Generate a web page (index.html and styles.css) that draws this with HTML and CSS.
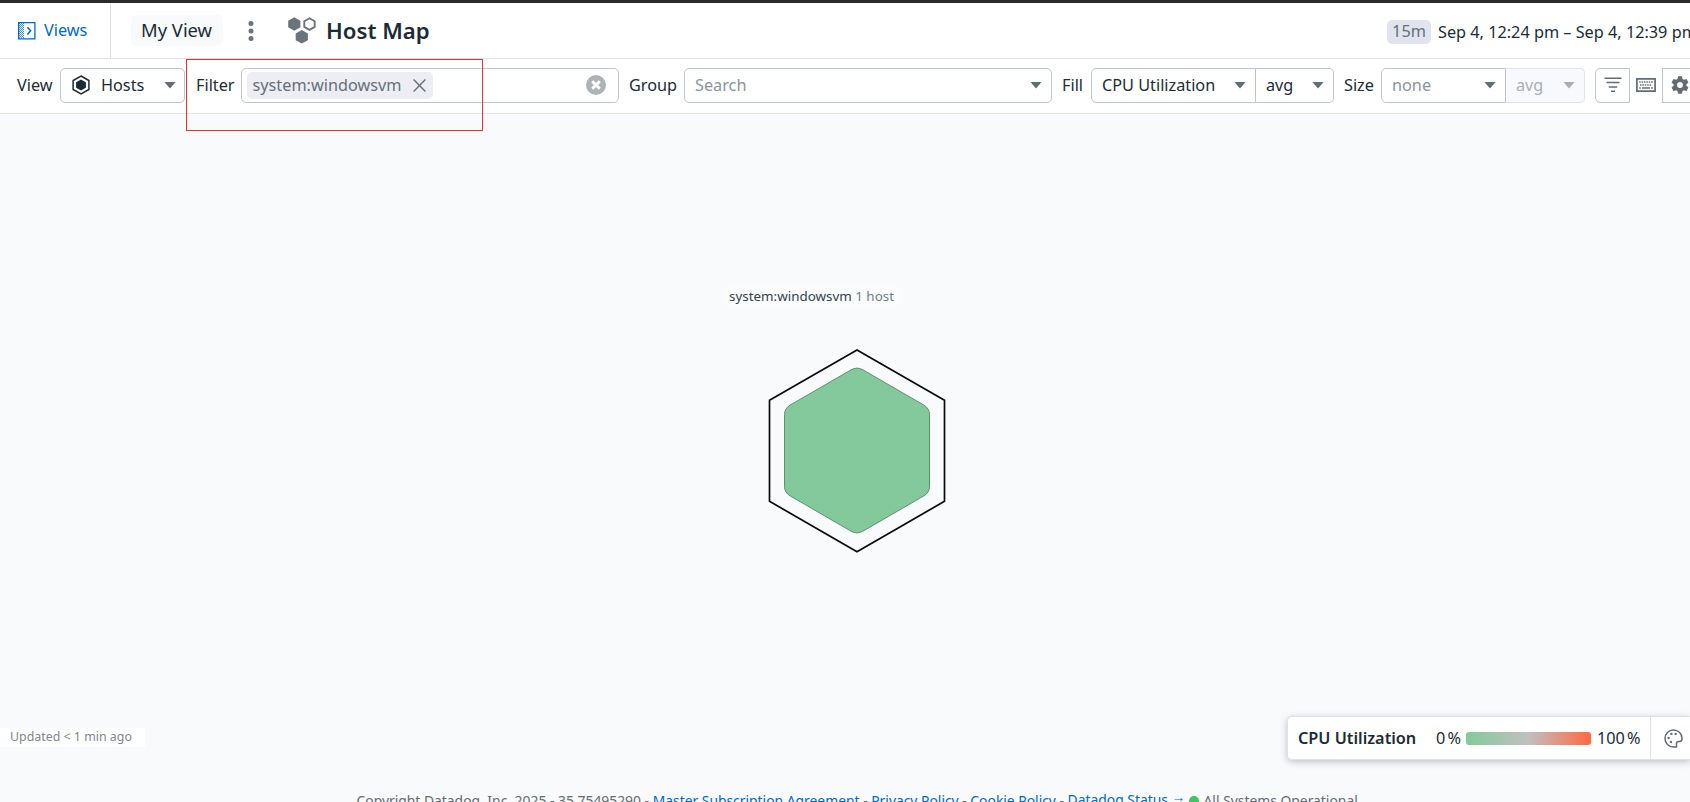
FILE: index.html
```html
<!DOCTYPE html>
<html lang="en">
<head>
<meta charset="utf-8">
<title>Host Map</title>
<link rel="stylesheet" href="styles.css">
</head>
<body>
<div class="page">
  <header class="header">
    <a class="views">
      <svg width="18" height="18" viewBox="0 0 18 18"><path d="M1 1.500h6M1 3.500h6M1 5.500h6M1 7.500h6M1 9.500h6M1 11.500h6M1 13.500h6M1 15.500h6" stroke="#0069c2" stroke-opacity=".75" stroke-dasharray="1 1"/><path d="M2 2.500h4M2 4.500h4M2 6.500h4M2 8.500h4M2 10.500h4M2 12.500h4M2 14.500h4" stroke="#0069c2" stroke-opacity=".75" stroke-dasharray="1 1"/><path d="M.6.6h16.300v16.300H.6z" fill="none" stroke="#0069c2" stroke-width="1.300"/><path d="M9.400 5.200l3.200 3.600-3.200 3.600" fill="none" stroke="#0069c2" stroke-width="1.500"/></svg>
      <span>Views</span>
    </a>
    <span class="my-view">My View</span>
    <svg class="kebab" width="6" height="20" viewBox="0 0 6 20"><g fill="#6b737c"><circle cx="3" cy="2.5" r="2.5"/><circle cx="3" cy="10" r="2.5"/><circle cx="3" cy="17.5" r="2.5"/></g></svg>
    <svg class="map-icon" width="28" height="27" viewBox="0 0 28 27"><g fill="#6b747b"><path d="M6.3.3l6.1 3.4v6.6l-6.1 3.4-6.1-3.4V3.700z"/><path d="M13.800 13l6.100 3.400v6.800l-6.100 3.400-6.100-3.400v-6.800z"/></g><path d="M21.500 1.300l5.200 3v5.600l-5.200 3-5.200-3V4.300z" fill="none" stroke="#6b747b" stroke-width="1.900"/></svg>
    <h1 class="title">Host Map</h1>
    <div class="time"><span class="badge">15m</span><span class="range">Sep 4, 12:24 pm – Sep 4, 12:39 pm</span></div>
  </header>
  <div class="toolbar">
    <span class="label label-view">View</span>
    <div class="box view-select">
      <svg width="18" height="20" viewBox="0 0 18 20"><path d="M9 1l7.900 4.500v9L9 19l-7.900-4.500v-9z" fill="none" stroke="#1c2b34" stroke-width="1.500"/><path d="M9 4.500l4.900 2.800v5.500L9 15.600l-4.900-2.800V7.300z" fill="#1c2b34"/></svg>
      <span class="grow">Hosts</span><i class="caret"></i>
    </div>
    <span class="label label-filter">Filter</span>
    <div class="box filter-box">
      <span class="chip">system:windowsvm<svg width="13" height="13" viewBox="0 0 13 13"><path d="M.6.6l11.800 11.800M12.400.6L.6 12.400" stroke="#667078" stroke-width="1.400"/></svg></span>
      <svg class="clear" width="20" height="20" viewBox="0 0 20 20"><circle cx="10" cy="10" r="10" fill="#adb3b5"/><path d="M6.200 6.200l7.600 7.600m0-7.600l-7.600 7.600" stroke="#fff" stroke-width="3"/></svg>
    </div>
    <span class="label label-group">Group</span>
    <div class="box group-box muted"><span class="grow">Search</span><i class="caret"></i></div>
    <span class="label label-fill">Fill</span>
    <div class="box metric join-left"><span class="grow">CPU Utilization</span><i class="caret"></i></div>
    <div class="box agg join-right"><span class="grow">avg</span><i class="caret"></i></div>
    <span class="label label-size">Size</span>
    <div class="box size-select join-left muted"><span class="grow">none</span><i class="caret"></i></div>
    <div class="box size-agg join-right disabled"><span class="grow">avg</span><i class="caret"></i></div>
    <div class="box icon-button filter-button"><svg width="18" height="16" viewBox="0 0 18 16"><path d="M.5 1.200h17M2.500 5.600h13M4.800 10h8.400M7 14.300h4" stroke="#626c73" stroke-width="1.500"/></svg></div>
    <svg class="keyboard" width="20" height="14" viewBox="0 0 20 14"><path d="M.9.9h18.200v12.200H.9z" fill="none" stroke="#626c73" stroke-width="1.700"/><path d="M3.200 4h13.700M4 7h12.200" stroke="#626c73" stroke-width="1.700" stroke-dasharray="1.500 .9"/><path d="M3.200 10h1.600M6 10h8M15.200 10h1.700" stroke="#626c73" stroke-width="1.700"/></svg>
    <div class="box icon-button gear-button"><svg width="18" height="18" viewBox="2 2 20 20"><path fill="#626c73" d="M19.140 12.940c.04-.3.060-.61.060-.94 0-.32-.02-.64-.07-.94l2.030-1.580a.49.49 0 0 0 .12-.61l-1.920-3.320a.49.49 0 0 0-.59-.22l-2.390.96a7 7 0 0 0-1.620-.94l-.36-2.540A.48.48 0 0 0 13.920 2.400h-3.840a.48.48 0 0 0-.47.41l-.36 2.540a7 7 0 0 0-1.620.94l-2.390-.96a.48.48 0 0 0-.59.22L2.730 8.870a.48.48 0 0 0 .12.610l2.030 1.580a6 6 0 0 0 0 1.880l-2.030 1.580a.49.49 0 0 0-.12.610l1.920 3.320c.12.220.37.290.59.220l2.390-.96c.5.380 1.030.7 1.620.94l.36 2.540c.05.240.24.410.48.410h3.840c.24 0 .44-.17.470-.41l.36-2.540a7 7 0 0 0 1.620-.94l2.390.96c.22.080.47 0 .59-.22l1.920-3.320a.48.48 0 0 0-.12-.61zM12 15.200a3.200 3.200 0 1 1 0-6.400 3.200 3.200 0 0 1 0 6.400z"/></svg></div>
  </div>
  <main class="canvas">
    <div class="group-label"><b>system:windowsvm</b> 1 host</div>
    <svg class="host" width="178" height="206" viewBox="0 0 178 206"><path d="M89 2l87.500 50.300v101L89 203.700 1.500 153.300v-101z" fill="none" stroke="#080a0b" stroke-width="1.700"/><path d="M84 21.300q5-2.600 10 0l62 35.900q5.500 3.300 5.500 9.300v72q0 6-5.500 9.300l-62 35.900q-5 2.600-10 0l-62-35.900q-5.500-3.300-5.500-9.300v-72q0-6 5.500-9.300z" fill="#84c99b" stroke="#5d926f"/></svg>
  </main>
  <div class="status">
    <span class="updated">Updated &lt; 1 min ago</span>
    <div class="legend">
      <b class="legend-title">CPU Utilization</b><span class="min">0 %</span><i class="gradient"></i><span class="max">100 %</span>
      <span class="palette"><svg width="19" height="19" viewBox="0 0 19 19"><path d="M9.400 1C4.700 1 1 4.800 1 9.500S4.700 18 9.400 18h3.100v-3.400c0-1.400.7-2 2-2h1.200c1.500-.3 2.300-1.400 2.300-2.900C18 4.300 14.100 1 9.400 1z" fill="none" stroke="#626c73" stroke-width="1.500" stroke-linejoin="round"/><g fill="#626c73"><circle cx="7.400" cy="4.900" r="1.200"/><circle cx="11.700" cy="4.900" r="1.200"/><circle cx="4.600" cy="9" r="1.200"/><circle cx="6.900" cy="13" r="1.200"/></g></svg></span>
    </div>
  </div>
  <footer class="footer"><span class="copy">Copyright Datadog, Inc. 2025 - 35.75495290 - <a>Master Subscription Agreement</a> - <a>Privacy Policy</a> - <a>Cookie Policy</a> - </span><a class="status-link">Datadog Status <span class="arrow">→</span></a><i class="dot"></i><span>All Systems Operational</span></footer>
  <div class="highlight"></div>
</div>
</body>
</html>
```
FILE: styles.css
```css
* { box-sizing: border-box; }
body { margin: 0; font: 16.25px/22px "Noto Sans", sans-serif; color: #1c2b34; background: #f9fafc; }
svg { display: block; flex: none; }
.page { position: relative; width: 1690px; height: 802px; overflow: hidden; display: flex; flex-direction: column; }
.header { height: 59px; flex: none; display: flex; align-items: center; background: #fff; border-top: 3px solid #2b2a2c; border-bottom: 1px solid #e0e1ed; white-space: nowrap; }
.views { width: 111px; height: 55px; flex: none; display: flex; align-items: center; gap: 8px; padding-left: 18px; border-right: 1px solid #dfe2eb; color: #0069c2; }
.views span { padding-bottom: 2px; }
.my-view { width: 92px; height: 31px; margin-left: 20px; flex: none; padding-left: 10px; font-size: 18.4px; line-height: 30px; background: #f9fafc; border-radius: 5px; }
.kebab { margin-left: 25px; }
.map-icon { margin-left: 34px; }
.title { margin: 0 0 0 10px; font-size: 22.2px; line-height: 29px; font-weight: 600; }
.time { width: 303px; margin-left: auto; display: flex; align-items: center; gap: 7px; padding-top: 3px; }
.badge { width: 44px; height: 24px; flex: none; text-align: center; background: #e1e3ed; color: #66707a; border-radius: 5px; }
.toolbar { height: 55px; flex: none; display: flex; align-items: center; background: #fff; border-bottom: 1px solid #dfe2eb; white-space: nowrap; padding: 0 0 2px 17px; }
.label { flex: none; }
.label-view { width: 43px; }
.label-filter { width: 56px; padding-left: 11px; }
.label-group { width: 65px; padding-left: 10px; }
.label-fill { width: 39px; padding-left: 10px; }
.label-size { width: 47px; padding-left: 10px; }
.box { height: 35px; flex: none; display: flex; align-items: center; padding: 0 9px 0 10px; border: 1px solid #bfc2dd; border-radius: 5px; background: #fff; }
.grow { flex: 1; }
.caret { width: 12px; height: 7px; background: #626c73; clip-path: polygon(0 0, 100% 0, 50% 100%); }
.view-select { width: 125px; gap: 11px; padding: 0 8px 0 11px; }
.filter-box { width: 378px; padding: 0 12px 0 5px; justify-content: space-between; }
.chip { width: 186px; height: 27px; display: flex; align-items: center; justify-content: space-between; padding: 0 7px 0 5.5px; border-radius: 5px; background: #ededf4; color: #667078; }
.group-box { width: 368px; }
.muted { color: #8b949b; }
.metric { width: 165px; }
.agg { width: 78px; }
.size-select { width: 125px; }
.size-agg { width: 79px; }
.join-left { border-radius: 5px 0 0 5px; }
.join-right { border-left: 0; border-radius: 0 5px 5px 0; }
.disabled { background: #f8f9fc; color: #a8afb4; border-color: #dfe1ed; }
.disabled .caret { background: #a8afb4; }
.icon-button { justify-content: center; padding: 0; }
.filter-button { width: 35px; margin-left: 10px; border-radius: 5px 0 0 5px; }
.keyboard { margin: 0 6px; }
.gear-button { width: 35px; border-radius: 0; }
.canvas { height: 602px; flex: none; display: flex; flex-direction: column; align-items: center; padding-top: 173px; }
.group-label { margin-right: 67px; height: 18px; padding: 0 6px; font-size: 13.4px; line-height: 19px; color: #737c84; background: #fbfcfd; border-radius: 5px; white-space: nowrap; }
.group-label b { font-weight: 450; color: #33424c; }
.host { margin: 43px 0 0 24px; }
.status { height: 44px; flex: none; display: flex; justify-content: space-between; }
.updated { width: 145px; height: 19px; margin-top: 12px; padding-left: 10px; font-size: 12.4px; line-height: 17px; color: #7e868c; background: #fff; }
.legend { width: 403px; height: 44px; display: flex; align-items: center; background: #fff; border: 1px solid #dfe2eb; border-right: 0; border-radius: 5px 0 0 5px; box-shadow: 0 2px 7px rgba(40, 45, 60, .28); white-space: nowrap; }
.legend-title { width: 148px; flex: none; padding-left: 10px; font-weight: 600; }
.min, .max { word-spacing: -2px; flex: none; }
.min { width: 30px; }
.gradient { width: 125px; height: 13px; flex: none; border-radius: 3px; background: linear-gradient(90deg, #84c99b, #c0c0c0 50%, #ff6842); }
.max { padding-left: 6px; width: 59px; }
.palette { height: 42px; display: flex; align-items: center; padding-left: 13px; border-left: 1px solid #dfe2eb; }
.footer { height: 42px; flex: none; display: flex; padding: 32px 0 0 356.5px; font-size: 13.87px; line-height: 18px; color: #626c73; white-space: pre; }
.footer a { color: #0069c2; }
.status-link { margin-top: -1px; }
.arrow { display: inline-block; width: 12px; line-height: 12px; vertical-align: 3px; }
.dot { width: 10px; height: 10px; margin: 4px 5px 0 5px; border-radius: 50%; background: #41c464; }
.highlight { position: absolute; left: 186px; top: 59px; width: 297px; height: 72px; border: 1px solid #e33337; }
```
